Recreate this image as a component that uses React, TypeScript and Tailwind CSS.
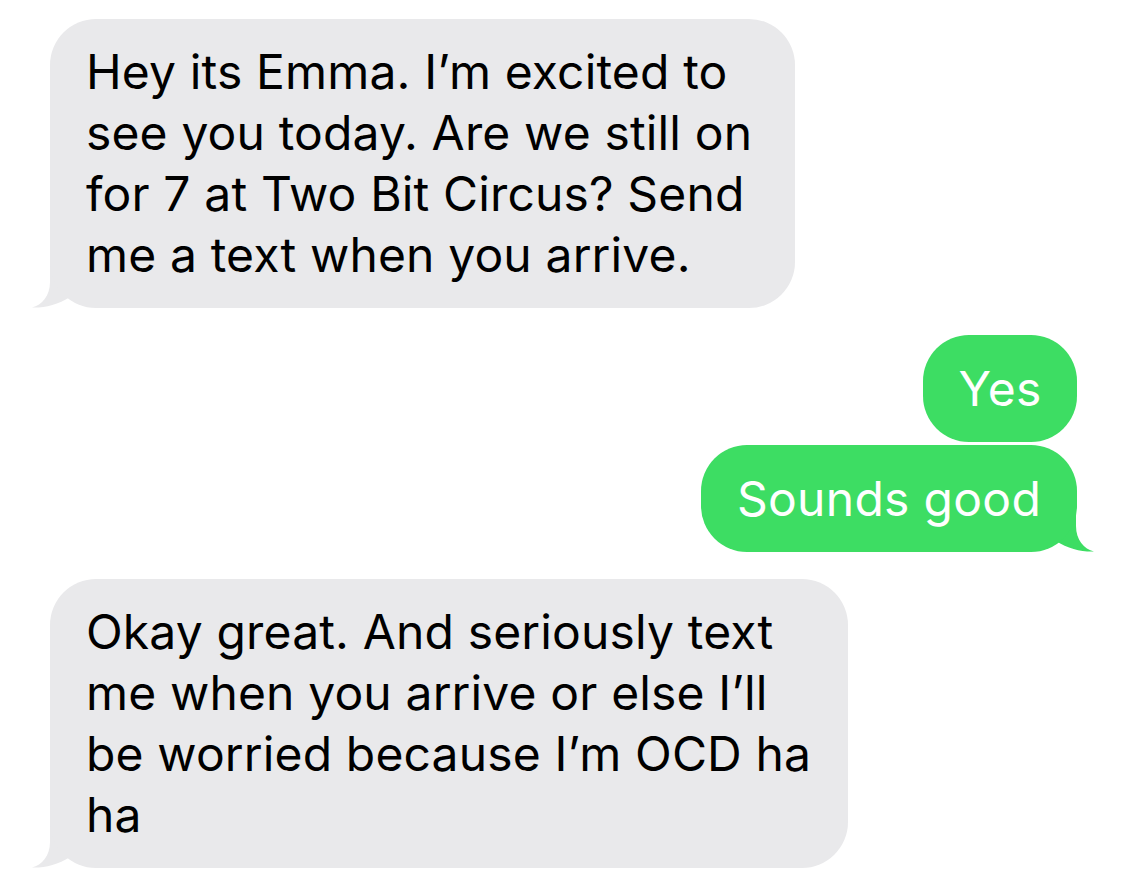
import React from "react";

const FONT = { fontFamily: "Inter, 'Liberation Sans', sans-serif" } as React.CSSProperties;

function TailLeft({ color }: { color: string }) {
  return (
    <svg
      className="absolute bottom-0 left-[-18px]"
      width="64"
      height="56"
      viewBox="0 0 64 56"
      fill={color}
    >
      <path d="M18 4 L18 30 C18 44 10 53 0 55.5 C12 56 26 53 38 45 L64 45 L64 4 Z" />
    </svg>
  );
}

function TailRight({ color }: { color: string }) {
  return (
    <svg
      className="absolute bottom-0 right-[-17px]"
      width="64"
      height="56"
      viewBox="0 0 64 56"
      fill={color}
    >
      <path d="M46 4 L46 30 C46 44 54 53 64 55.5 C52 56 38 53 26 45 L0 45 L0 4 Z" />
    </svg>
  );
}

function Gray({ lines, width }: { lines: string[]; width: string }) {
  return (
    <div className={`relative ${width}`}>
      <TailLeft color="#e9e9eb" />
      <div className="relative rounded-[46px] bg-[#e9e9eb] pl-[36px] pt-[22px] pb-[23px] text-black">
        {lines.map((l, i) => (
          <div key={i} className="whitespace-nowrap text-[48px] leading-[61px] tracking-[0.15px]">
            {l}
          </div>
        ))}
      </div>
    </div>
  );
}

export default function App() {
  return (
    <div className="min-h-[896px] w-[1122px] bg-white pl-[50px] pr-[45px] pt-[19px]" style={FONT}>
      <Gray
        width="w-[745px]"
        lines={[
          "Hey its Emma. I\u2019m excited to",
          "see you today. Are we still on",
          "for 7 at Two Bit Circus? Send",
          "me a text when you arrive.",
        ]}
      />
      <div className="mt-[27px] flex flex-col items-end">
        <div className="flex h-[107px] w-[154px] items-center justify-center rounded-[46px] bg-[#3ddd63] text-[48px] leading-[61px] tracking-[0.3px] text-white">
          Yes
        </div>
        <div className="relative mt-[3px] w-[376px]">
          <TailRight color="#3ddd63" />
          <div className="relative flex h-[107px] items-center justify-center rounded-[46px] bg-[#3ddd63] text-[48px] leading-[61px] tracking-[0.3px] text-white whitespace-nowrap">
            Sounds good
          </div>
        </div>
      </div>
      <div className="mt-[27px]">
        <Gray
          width="w-[798px]"
          lines={[
            "Okay great. And seriously text",
            "me when you arrive or else I\u2019ll",
            "be worried because I\u2019m OCD ha",
            "ha",
          ]}
        />
      </div>
    </div>
  );
}
